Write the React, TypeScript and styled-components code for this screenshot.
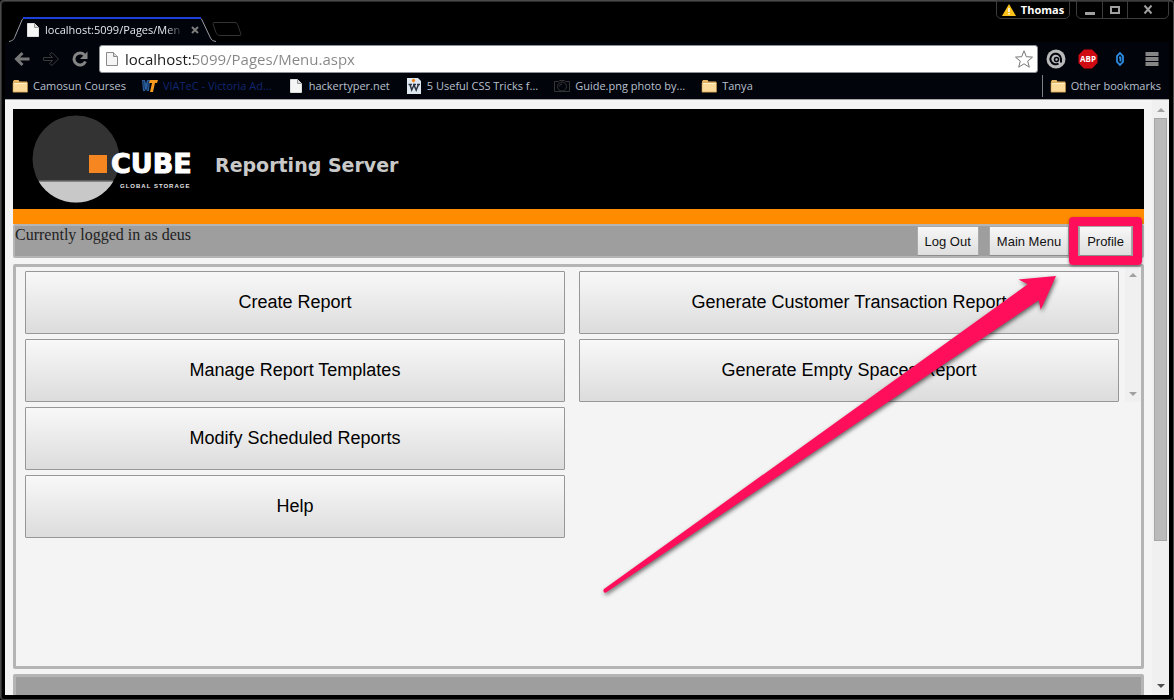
import React from "react";
import styled, { createGlobalStyle } from "styled-components";

const Global = createGlobalStyle`
  * { box-sizing: border-box; }
  html, body { margin: 0; background: #000; }
  button, input { font: inherit; margin: 0; }
  svg { display: block; flex: none; }
`;

const UI_FONT = `"Open Sans", "Noto Sans", sans-serif`;

const BrowserWindow = styled.div`
  display: flex;
  flex-direction: column;
  height: 100vh;
  padding: 0 5px 5px;
  background: #000;
  border-radius: 4px;
  box-shadow: inset 0 0 0 1px #4a4a4a, inset 1px 1px 0 1px #2c2c2c;
  font-family: ${UI_FONT};
  overflow: hidden;
`;

const TabStrip = styled.div`
  display: flex;
  align-items: flex-start;
  height: 42px;
  flex: none;
  padding-left: 4px;
`;

const Tab = styled.div`
  position: relative;
  z-index: 0;
  display: flex;
  align-items: center;
  width: 208px;
  height: 25px;
  margin-top: 17px;
  padding: 0 14px 0 18px;
`;

const TabShape = styled.svg`
  position: absolute;
  inset: 0;
  z-index: -1;
`;

const TabTitle = styled.span`
  flex: 1;
  min-width: 0;
  margin-left: 6px;
  font-size: 11px;
  line-height: 16px;
  color: #e4e6ea;
  white-space: nowrap;
  mask-image: linear-gradient(to right, #000 88%, transparent);
`;

const PlainButton = styled.button`
  display: flex;
  align-items: center;
  justify-content: center;
  padding: 0;
  border: 0;
  background: none;
  color: inherit;
`;

const TabClose = styled(PlainButton)`
  width: 16px;
  height: 16px;
  margin-left: 4px;
`;

const NewTab = styled(PlainButton)`
  margin: 21px 0 0 -5px;
`;

const WindowControls = styled.div`
  display: flex;
  gap: 6px;
  margin-left: auto;
`;

const ControlGroup = styled.div`
  display: flex;
  height: 19px;
  border: 1px solid #3c3c3c;
  border-radius: 0 0 5px 5px;
`;

const ControlButton = styled(PlainButton)<{ $wide?: boolean }>`
  width: ${(p) => (p.$wide ? 41 : 25)}px;
  & + & { border-left: 1px solid #3c3c3c; }
`;

const UserButton = styled(PlainButton)`
  gap: 5px;
  width: 72px;
  color: #fff;
  font-size: 11px;
  font-weight: 700;
  line-height: 16px;
`;

const Toolbar = styled.div`
  display: flex;
  align-items: center;
  flex: none;
  height: 33px;
  padding: 0 7px 0 9px;
  background: #02040c;
`;

const NavButtons = styled.div`
  display: flex;
  gap: 13px;
  margin-right: 11px;
`;

const Omnibox = styled.div`
  display: flex;
  align-items: center;
  flex: 1;
  min-width: 0;
  height: 28px;
  padding: 0 4px 0 6px;
  background: #fff;
  border: 1px solid #8c8f94;
  border-radius: 3px;
`;

const UrlInput = styled.input`
  flex: 1;
  min-width: 0;
  margin-left: 7px;
  padding: 0;
  border: 0;
  outline: 0;
  font-size: 15px;
  line-height: 22px;
  color: transparent;
  background: linear-gradient(to right, #1c1c1c 69px, #858585 69px);
  background-clip: text;
`;

const Extensions = styled.div`
  display: flex;
  gap: 12px;
  margin-left: 8px;
`;

const BookmarkBar = styled.nav`
  display: flex;
  align-items: center;
  gap: 16px;
  flex: none;
  height: 25px;
  padding: 0 8px 2px 7px;
  background: #02040c;
  border-bottom: 1px solid #a4a6a8;
`;

const Bookmark = styled.a<{ $color?: string }>`
  display: flex;
  align-items: center;
  gap: 5px;
  color: ${(p) => p.$color ?? "#b9c0cc"};
  font-size: 11px;
  line-height: 16px;
  text-decoration: none;
  white-space: nowrap;
`;

const BookmarkIcon = styled.span`
  display: flex;
  justify-content: center;
  width: 16px;
`;

const OtherBookmarks = styled.div`
  display: flex;
  align-items: center;
  height: 22px;
  margin-left: auto;
  padding-left: 7px;
  border-left: 1px solid #7b808a;
`;

const Viewport = styled.div`
  display: flex;
  flex: 1;
  min-height: 0;
  background: #f4f4f4;
`;

const Page = styled.div`
  flex: 1;
  min-width: 0;
  padding: 9px 8px 0;
  overflow: hidden;
`;

const Banner = styled.header`
  display: flex;
  height: 115px;
  padding-left: 19px;
  background: #000;
  border-bottom: 15px solid #ff8c00;
`;

const BannerTitle = styled.h1`
  margin: 44px 0 0 17px;
  font-family: "DejaVu Sans", sans-serif;
  font-size: 19px;
  font-weight: 700;
  line-height: 24px;
  color: #c9c9c9;
  white-space: nowrap;
`;

const StatusBar = styled.div`
  display: flex;
  align-items: flex-start;
  height: 34px;
  padding-right: 10px;
  background: #9e9e9e;
  border: 2px solid #b4b4b4;
  border-radius: 2px;
`;

const StatusText = styled.span`
  margin-right: auto;
  font-family: "Liberation Serif", serif;
  font-size: 16px;
  line-height: 18px;
  color: #222;
`;

const StatusActions = styled.div`
  display: flex;
  gap: 10px;
`;

const ActionSlot = styled.div`
  position: relative;
`;

const ActionButton = styled.button`
  height: 30px;
  padding: 2px 7px 0;
  border: 1px solid #a9a9a9;
  border-bottom-color: #8c8c8c;
  background: linear-gradient(#f7f7f7, #dedede);
  font-family: "Liberation Sans", Arial, sans-serif;
  font-size: 13px;
  line-height: 16px;
  color: #111;
`;

const Highlight = styled.div`
  position: absolute;
  inset: -9px -10px;
  border: 9px solid #ff0f5b;
  border-radius: 4px;
  box-shadow: 0 1px 3px rgba(0, 0, 0, 0.5);
  pointer-events: none;
  z-index: 2;
`;

const Arrow = styled.svg`
  position: absolute;
  top: 44px;
  right: 72px;
  pointer-events: none;
  z-index: 2;
  filter: drop-shadow(1px 2px 2px rgba(0, 0, 0, 0.6));
`;

const MenuPanel = styled.main`
  display: flex;
  align-items: flex-start;
  min-height: 405px;
  margin-top: 6px;
  padding-left: 9px;
  border: 3px solid #b4b4b4;
  border-radius: 2px;
`;

const MenuColumn = styled.div`
  display: flex;
  flex: 1;
  flex-direction: column;
  gap: 5px;
  padding-top: 4px;
  & + & { margin-left: 14px; }
`;

const MenuButton = styled.button`
  height: 63px;
  padding: 0 8px 2px;
  border: 1px solid #979797;
  border-radius: 1px;
  background: linear-gradient(#f8f8f8, #dcdcdc);
  font-family: "Liberation Sans", Arial, sans-serif;
  font-size: 18px;
  line-height: 22px;
  color: #000;
`;

const ListScrollbar = styled.div`
  display: flex;
  flex-direction: column;
  justify-content: space-between;
  align-items: center;
  width: 16px;
  height: 135px;
  margin-left: 6px;
  padding: 6px 0;
  background: #f0f0f0;
`;

const PageScrollbar = styled.div`
  display: flex;
  flex-direction: column;
  align-items: center;
  width: 17px;
  padding: 8px 0 7px;
  background: #f0f0f0;
`;

const ScrollThumb = styled.div`
  width: 13px;
  height: 73%;
  margin: 6px 0 auto;
  background: #bababa;
  border: 1px solid #a6a6a6;
`;

const PageFooter = styled.footer`
  height: 40px;
  margin-top: 5px;
  background: #9e9e9e;
  border: 3px solid #b4b4b4;
  border-radius: 2px;
`;

const Triangle = ({ down, dark }: { down?: boolean; dark?: boolean }) => (
  <svg width="8" height="4" viewBox="0 0 8 4" fill={dark ? "#505050" : "#a0a0a0"}>
    <path d={down ? "M0 0h8L4 4z" : "M0 4h8L4 0z"} />
  </svg>
);

const FileIcon = ({ outline }: { outline?: boolean }) => (
  <svg width="12" height="16" viewBox="0 0 12 16">
    <path
      d="M.5 1.5h7l4 4v9H.5z"
      fill="#f5f5f5"
      stroke={outline ? "#8a8a8a" : "#dcdcdc"}
    />
    <path d="M7.5 1.5v4h4" fill="#d8d8d8" stroke={outline ? "#8a8a8a" : "#999"} />
  </svg>
);

const FolderIcon = () => (
  <svg width="16" height="16" viewBox="0 0 16 16">
    <path d="M1 3.500l1-1.500h4.500l1 1.500H15V13H1z" fill="#e9b866" />
    <path d="M1 4.500h14.500V14H1z" fill="#fcdb9a" stroke="#c99748" strokeWidth=".6" />
    <path d="M2 5.500h12.500" stroke="#fff0c8" />
    <path d="M1 14.500h14.500" stroke="#8a6a3a" strokeWidth=".6" />
  </svg>
);

const ViatecIcon = () => (
  <svg width="16" height="16" viewBox="0 0 16 16">
    <path d="M0 2h3l1 4 1-4h3L7 13H5L4 11l-1 2H1z" fill="#2c5f9e" />
    <path d="M1.500 3l1 9M6.500 3l-1 9" stroke="#16345e" />
    <path d="M8 2h8l-1 3h-2l-2 9H8l2-9H7z" fill="#f79a1e" />
  </svg>
);

const WordIcon = () => (
  <svg width="14" height="16" viewBox="0 0 14 16">
    <path d="M0 0h11l3 3v13H0z" fill="#dfe8f0" />
    <circle cx="6.500" cy="2.500" r="1.700" fill="#ee8a1d" />
    <path d="M1.500 6.500h3.500M6 6.500h3M10 6.500h3M3 6.500L4.700 12 7 7l2.200 5 2.300-5.500" fill="none" stroke="#2b3440" strokeWidth="1.500" />
  </svg>
);

const CameraIcon = () => (
  <svg width="16" height="16" viewBox="0 0 16 16" fill="none" stroke="#343434">
    <path d="M.5 3.500h4l1-1h5l1 1h4v10H.5z" />
    <circle cx="8" cy="8.500" r="4.500" />
    <path d="M5.500 8.500A2.500 2.500 0 0 1 8 6" />
  </svg>
);

const CubeLogo = () => (
  <svg width="166" height="100" viewBox="0 0 166 100" role="img" aria-label="Cube Global Storage">
    <circle cx="63" cy="50" r="43.500" fill="#333" transform="translate(-19 0)" />
    <path d="M6.700 72.500h74.600A43.500 43.500 0 0 1 6.700 72.500z" fill="#c8c8c8" />
    <path d="M7 72h74" stroke="#888" />
    <rect x="57" y="46" width="18" height="18" fill="#f6861f" />
    <text x="79" y="64" fill="#fff" stroke="#fff" strokeWidth="1" fontFamily="DejaVu Sans" fontWeight="700" fontSize="27">CUBE</text>
    <text x="88" y="79" fill="#e4e4e4" fontFamily="Liberation Sans" fontWeight="700" fontSize="6" letterSpacing="1">GLOBAL STORAGE</text>
  </svg>
);

const bookmarks = [
  { label: "Camosun Courses", icon: <FolderIcon /> },
  { label: "VIATeC - Victoria Ad...", icon: <ViatecIcon />, color: "#10266e" },
  { label: "hackertyper.net", icon: <FileIcon /> },
  { label: "5 Useful CSS Tricks f...", icon: <WordIcon /> },
  { label: "Guide.png photo by...", icon: <CameraIcon /> },
  { label: "Tanya", icon: <FolderIcon /> },
];

const reportMenu = ["Create Report", "Manage Report Templates", "Modify Scheduled Reports", "Help"];
const generateMenu = ["Generate Customer Transaction Report", "Generate Empty Spaces Report"];

export default function App() {
  return (
    <BrowserWindow>
      <Global />
      <TabStrip>
        <Tab>
          <TabShape width="208" height="25" viewBox="0 0 208 25" fill="none">
            <path d="M0 25c4-1 5-2 6-5L13 3c1-2 2-2.500 4-2.500h172c2 0 3 .5 4 2.500l8 17c1 3 3 4 6 5z" fill="#02040c" />
            <path d="M0 24.500c4-1 5-2 6-5L13 3c1-2 2-2.500 4-2.500M189 .5c2 0 3 .5 4 2.500l8 17c1 3 3 4 6 4.500" stroke="#9a9da2" />
            <path d="M14 1h178" stroke="#1b41d8" strokeWidth="2" />
          </TabShape>
          <FileIcon />
          <TabTitle>localhost:5099/Pages/Men</TabTitle>
          <TabClose aria-label="Close tab">
            <svg width="8" height="8" viewBox="0 0 8 8" stroke="#7d7d7d" strokeWidth="2">
              <path d="M1 1l6 6M7 1L1 7" />
            </svg>
          </TabClose>
        </Tab>
        <NewTab aria-label="New tab">
          <svg width="30" height="16" viewBox="0 0 30 16" fill="none" stroke="#333">
            <path d="M2 1.500h21c2 0 2 1 3 3l3 9c0 1 0 1-2 1H8c-2 0-3-1-4-3L1 3c0-1 0-1.500 1-1.500z" />
          </svg>
        </NewTab>
        <WindowControls>
          <ControlGroup>
            <UserButton>
              <svg width="14" height="12" viewBox="0 0 14 12">
                <path d="M7 0l7 12H0z" fill="#fcc21c" />
                <path d="M7 4v4M7 9v1.500" stroke="#fff" strokeWidth="1.500" />
              </svg>
              Thomas
            </UserButton>
          </ControlGroup>
          <ControlGroup>
            <ControlButton aria-label="Minimize">
              <svg width="10" height="14" viewBox="0 0 10 14"><path d="M0 9h10v3H0z" fill="#a0a0a0" /></svg>
            </ControlButton>
            <ControlButton aria-label="Maximize">
              <svg width="10" height="8" viewBox="0 0 10 8"><path d="M1 1h8v6H1z" fill="none" stroke="#a0a0a0" strokeWidth="2" /></svg>
            </ControlButton>
            <ControlButton $wide aria-label="Close">
              <svg width="10" height="9" viewBox="0 0 10 9" stroke="#a0a0a0" strokeWidth="2" fill="none">
                <path d="M1.500 .5l7 8M8.500 .5l-7 8" />
              </svg>
            </ControlButton>
          </ControlGroup>
        </WindowControls>
      </TabStrip>

      <Toolbar>
        <NavButtons>
          <PlainButton aria-label="Back">
            <svg width="16" height="16" viewBox="0 0 16 16" fill="none" stroke="#777" strokeWidth="3">
              <path d="M15.500 8H3M8.500 2l-6 6 6 6" />
            </svg>
          </PlainButton>
          <PlainButton aria-label="Forward">
            <svg width="16" height="16" viewBox="0 0 16 16" fill="none" stroke="#3a3a3a">
              <path d="M.5 6.500h9L6.500 3.500 9 1.500 15.500 8 9 14.500 6.500 12.500l3-3h-9z" />
            </svg>
          </PlainButton>
          <PlainButton aria-label="Reload">
            <svg width="16" height="16" viewBox="0 0 16 16">
              <path d="M12.500 4A6 6 0 1 0 13.500 10.500" fill="none" stroke="#858585" strokeWidth="3" />
              <path d="M15.500 .5V8H8z" fill="#858585" />
            </svg>
          </PlainButton>
        </NavButtons>
        <Omnibox>
          <FileIcon outline />
          <UrlInput aria-label="Address" defaultValue="localhost:5099/Pages/Menu.aspx" />
          <PlainButton aria-label="Bookmark this page">
            <svg width="18" height="18" viewBox="0 0 18 18" fill="none" stroke="#777" strokeLinejoin="round">
              <path d="M9 .8l2.300 5.900 6.200.4-4.800 4 1.600 6.100L9 13.800l-5.300 3.400 1.600-6.100-4.800-4 6.200-.4z" />
            </svg>
          </PlainButton>
        </Omnibox>
        <Extensions>
          <PlainButton aria-label="Disconnect">
            <svg width="20" height="20" viewBox="0 0 20 20">
              <circle cx="10" cy="10" r="9.500" fill="#b9b9b9" />
              <path d="M12.500 14.500A5.300 5.300 0 1 1 15 10v3.500" fill="none" stroke="#02040c" strokeWidth="2" />
              <circle cx="10.500" cy="10.500" r="2" fill="none" stroke="#02040c" strokeWidth="1.500" />
            </svg>
          </PlainButton>
          <PlainButton aria-label="Adblock Plus">
            <svg width="20" height="20" viewBox="0 0 20 20">
              <path d="M6 .5h8L19.500 6v8L14 19.500H6L.5 14V6z" fill="#cf0a12" />
              <text x="10" y="13" textAnchor="middle" fill="#fff" fontFamily="Open Sans" fontWeight="700" fontSize="8">ABP</text>
            </svg>
          </PlainButton>
          <PlainButton aria-label="Extension">
            <svg width="20" height="20" viewBox="0 0 20 20" fill="none" stroke="#2b8be0" strokeWidth="1.800">
              <path d="M10 4L7 7v6l3 3 3-3V7z" />
              <path d="M9 8.500h1.500v3H9.500" />
            </svg>
          </PlainButton>
          <PlainButton aria-label="Menu">
            <svg width="20" height="20" viewBox="0 0 20 20" fill="#858585">
              <path d="M3.500 3h13v4h-13zM3.500 8h13v4h-13zM3.500 13h13v4h-13z" />
            </svg>
          </PlainButton>
        </Extensions>
      </Toolbar>

      <BookmarkBar>
        {bookmarks.map((b) => (
          <Bookmark key={b.label} href="#" $color={b.color}>
            <BookmarkIcon>{b.icon}</BookmarkIcon>
            {b.label}
          </Bookmark>
        ))}
        <OtherBookmarks>
          <Bookmark href="#">
            <BookmarkIcon>
              <FolderIcon />
            </BookmarkIcon>
            Other bookmarks
          </Bookmark>
        </OtherBookmarks>
      </BookmarkBar>

      <Viewport>
        <Page>
          <Banner>
            <CubeLogo />
            <BannerTitle>Reporting Server</BannerTitle>
          </Banner>
          <StatusBar>
            <StatusText>Currently logged in as deus</StatusText>
            <StatusActions>
              <ActionButton>Log Out</ActionButton>
              <ActionButton>Main Menu</ActionButton>
              <ActionSlot>
                <ActionButton>Profile</ActionButton>
                <Highlight />
                <Arrow width="460" height="330" viewBox="0 0 460 330" aria-hidden="true">
                  <path d="M4 319L427.700 14.300 418.500 9.500 456 6 440.700 40 438.700 30.300 6 322.500c-2 1-3.500-2-2-3.500z" fill="#ff0f5b" />
                </Arrow>
              </ActionSlot>
            </StatusActions>
          </StatusBar>
          <MenuPanel>
            <MenuColumn>
              {reportMenu.map((label) => (
                <MenuButton key={label}>{label}</MenuButton>
              ))}
            </MenuColumn>
            <MenuColumn>
              {generateMenu.map((label) => (
                <MenuButton key={label}>{label}</MenuButton>
              ))}
            </MenuColumn>
            <ListScrollbar>
              <Triangle />
              <Triangle down />
            </ListScrollbar>
          </MenuPanel>
          <PageFooter />
        </Page>
        <PageScrollbar>
          <Triangle />
          <ScrollThumb />
          <Triangle down dark />
        </PageScrollbar>
      </Viewport>
    </BrowserWindow>
  );
}
